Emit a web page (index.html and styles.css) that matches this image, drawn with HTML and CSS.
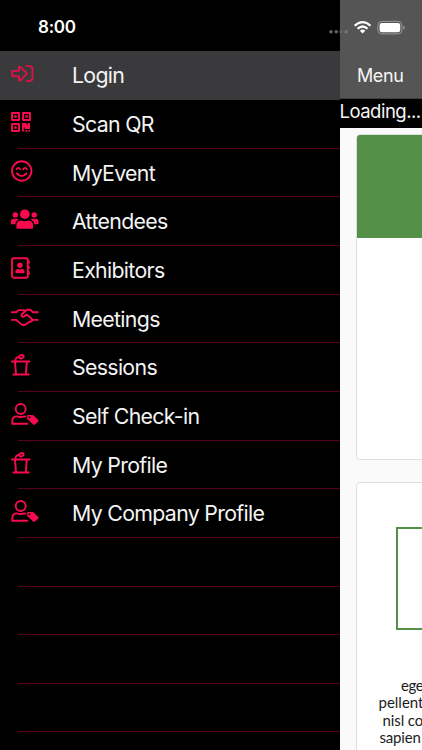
FILE: index.html
```html
<!DOCTYPE html>
<html lang="en">
<head>
<meta charset="utf-8">
<title>Menu</title>
<link rel="stylesheet" href="styles.css">
</head>
<body>
<svg class="defs" width="0" height="0">
  <symbol id="podium" viewBox="0 0 28 22" overflow="visible"><g class="line"><path d="M.9 7.5h17.6M4 7.8l1 12.4M15.8 7.8l-1 12.4M2.4 20.5h15.4M4.7 7.2Q3.7 3.4 8 3"/><ellipse cx="10.4" cy="2.7" rx="2.3" ry="1.6" transform="rotate(-15 10.4 2.7)"/></g></symbol>
  <symbol id="usertag" viewBox="0 0 28 22" overflow="visible"><g class="line"><circle cx="9.7" cy="6" r="5"/><path d="M16.2 20.7H1.3V18Q1.3 13.4 5.8 13.4Q7 13.4 8 13.8Q9.7 14.2 11.5 13.8Q13 13.2 14.4 13.7"/></g><path class="solid" fill-rule="evenodd" d="M16.5 11.9h4.8q.6 0 1 .4l5 4.7q.7.7 0 1.4l-3.8 3.3q-.7.5-1.4-.1l-5.3-5.1q-.6-.5-.6-1.2v-3.1q0-.3.3-.3zm2 1.4a1 1 0 1 0 .1 2 1 1 0 0 0-.1-2z"/></symbol>
</svg>
<div class="app">
  <aside class="sidebar">
    <div class="clock">8:00</div>
    <ul class="menu">
      <li class="row active"><svg class="icon" viewBox="0 0 28 22"><g class="line"><path d="M1.2 8.9H8V5.4q0-1.6 1.4-.5l6 5.8q.8.9 0 1.7l-6 5.8Q8 19.3 8 17.7v-3.4H2q-.8 0-.8-.8zM15.5 4.1h3q3 0 3 3v9q0 3-3 3h-3"/></g></svg><span class="label">Login</span></li>
      <li class="row"><svg class="icon" viewBox="0 0 28 22"><g class="line"><path d="M1 2h7v7H1zM12 2h7v7h-7zM1 13h7v7H1z"/></g><path class="solid" d="M3.3 4.3h2.4v2.4H3.3zM14.3 4.3h2.4v2.4h-2.4zM3.3 15.3h2.4v2.4H3.3zM11 12h4.4v1.5h1.5V12H19v6h-5v-1.5h-1.2v4H11zM14.6 19h1.6v1.7h-1.6zM17.4 19H19v1.7h-1.6z"/></svg><span class="label">Scan QR</span></li>
      <li class="row"><svg class="icon" viewBox="0 0 28 22"><g class="line"><circle cx="10.7" cy="11" r="9.7"/><path d="M6 13.5q4.7 5.2 9.4 0M5.5 9.2q1.8-2.6 3.6 0M12.3 9.2q1.8-2.6 3.6 0"/></g></svg><span class="label">MyEvent</span></li>
      <li class="row"><svg class="icon" viewBox="0 0 28 22"><g class="solid"><circle cx="13.8" cy="6.2" r="4.8"/><circle cx="4.3" cy="6.9" r="2.7"/><circle cx="23.2" cy="6.9" r="2.7"/><path d="M6.1 20.8q-.7 0-.7-.8v-2.2q0-5.2 5.1-5.2 3.3 1.3 6.5 0 5.1 0 5.1 5.2V20q0 .8-.7.8zM0 16.3v-2.7q0-2.8 2.7-2.8h3.2q1.2 0 1.8.8-3.1 1.7-3.4 4.7zM27.5 16.3v-2.7q0-2.8-2.7-2.8h-3.2q-1.2 0-1.8.8 3.1 1.7 3.4 4.7z"/></g></svg><span class="label">Attendees</span></li>
      <li class="row"><svg class="icon" viewBox="0 0 28 22"><g class="line"><rect x="1" y="1.2" width="15.8" height="19.5" rx="1.7"/></g><g class="solid"><circle cx="8.9" cy="8.2" r="2.7"/><path d="M4.3 15.6v-1q0-2.5 2.7-2.5 1.9.7 3.8 0 2.7 0 2.7 2.5v1q0 .7-.8.7H5q-.7 0-.7-.7zM17 3.4h1.3q.5 0 .5.5v2.2q0 .5-.5.5H17zM17 8.8h1.3q.5 0 .5.5v2.2q0 .5-.5.5H17zM17 14.2h1.3q.5 0 .5.5v2.2q0 .5-.5.5H17z"/></g></svg><span class="label">Exhibitors</span></li>
      <li class="row"><svg class="icon" viewBox="0 0 28 22"><g class="line"><path d="M.8 6.2h4.5l2.2-2.1h5.2l1.7.9 1.6-1.2h3.5L22 6.3h4.8M14.4 5l-3.6 3.3q-1 1.3.2 2.2 1.2.7 2.5-.3l2-1.7 5 4q1.5 1.6.1 2.8-1.1.8-2.3.2-.4 1.7-2.3 1.6-.8 2-2.8 1.5-1.5 1-3.2-.5l-4.7-4.2H.8M20.8 13.9h6"/></g></svg><span class="label">Meetings</span></li>
      <li class="row"><svg class="icon"><use href="#podium"/></svg><span class="label">Sessions</span></li>
      <li class="row"><svg class="icon"><use href="#usertag"/></svg><span class="label">Self Check-in</span></li>
      <li class="row"><svg class="icon"><use href="#podium"/></svg><span class="label">My Profile</span></li>
      <li class="row"><svg class="icon"><use href="#usertag"/></svg><span class="label">My Company Profile</span></li>
      <li class="row"></li>
      <li class="row"></li>
      <li class="row"></li>
      <li class="row"></li>
      <li class="row"></li>
    </ul>
  </aside>
  <main class="content">
    <header class="topbar">Menu</header>
    <div class="loading">Loading...</div>
    <div class="cards">
      <section class="card first"><div class="banner"></div></section>
      <section class="card second">
        <div class="frame"></div>
        <div class="copy">
          <p class="l1">ege</p>
          <p class="l2">pellent</p>
          <p class="l3">nisl co</p>
          <p class="l4">sapien</p>
        </div>
      </section>
    </div>
  </main>
  <svg class="status" viewBox="0 0 80 20">
    <g fill="#626262"><circle cx="3" cy="13.8" r="1.8"/><circle cx="8.2" cy="13.8" r="1.8"/><circle cx="13.1" cy="13.8" r="1.8"/><circle cx="18.2" cy="13.8" r="1.8" fill="#777"/></g>
    <g fill="none" stroke="#fff" stroke-width="2.2"><path d="M26.7 7.7q7.9-7.2 15.8 0M29.6 10.8q5-4.6 10 0"/></g>
    <path fill="#fff" d="M31.9 12.7q2.7-2.2 5.4 0L34.6 15.5z"/>
    <rect x="49.9" y="3.4" width="24" height="12.5" rx="3.7" fill="none" stroke="#999"/>
    <rect x="51.6" y="5" width="20.6" height="9.3" rx="2.3" fill="#fff"/>
    <path d="M75.3 7.8q1.5.4 1.5 1.9t-1.5 1.9z" fill="#999"/>
  </svg>
</div>
</body>
</html>
```
FILE: styles.css
```css
* { box-sizing: border-box; }
body { margin: 0; font-family: Inter, "Liberation Sans", sans-serif; }
p, ul { margin: 0; padding: 0; }
.defs { position: absolute; }
.app { position: relative; display: flex; width: 422px; height: 750px; overflow: hidden; background: #fafafa; }
.sidebar { flex: none; width: 339.5px; height: 750px; overflow: hidden; background: #000; }
.clock { height: 51.3px; padding: 17px 0 0 38px; color: #fff; font-size: 17px; line-height: 21px; font-weight: 600; letter-spacing: -.25px; }
.menu { list-style: none; }
.row {
  display: flex;
  height: 48.67px;
  padding-left: 11px;
  color: #f4f4f4;
  background: linear-gradient(#58001f, #58001f) 18px 100% / 100% 1px no-repeat;
}
.row.active { background: #3a3a3c; }
.icon { flex: none; width: 28px; height: 22px; margin-top: 11px; overflow: visible; }
.active .icon { opacity: .85; }
.line { fill: none; stroke: #f90a4e; stroke-width: 1.9; stroke-linejoin: round; stroke-linecap: round; }
.solid { fill: #f90a4e; }
.label { margin-left: 33px; font-size: 21.3px; line-height: 48px; letter-spacing: -.67px; white-space: nowrap; }
.content { flex: none; width: 82.5px; overflow: hidden; }
.topbar { height: 99px; padding: 64px 0 0 17.5px; background: #555; color: #f5f5f5; font-size: 18px; line-height: 24px; letter-spacing: -.4px; border-bottom: 1px solid #3e3e3e; }
.loading { height: 29px; background: #000; color: #f5f5f5; font-size: 18.5px; line-height: 24px; letter-spacing: -.5px; white-space: nowrap; }
.cards { display: flex; flex-direction: column; gap: 22px; padding: 6px 0 0 16.5px; }
.card { width: 120px; border: 1px solid #dedede; border-radius: 4px; background: #fff; overflow: hidden; }
.first { height: 326px; }
.second { height: 300px; }
.banner { height: 103px; background: #559048; }
.frame { width: 100px; height: 103px; margin: 44px 0 0 39px; border: 2px solid #559048; }
.copy { margin-top: 47px; color: #1c1c1c; font-family: Lato, sans-serif; font-size: 15px; line-height: 17.4px; white-space: nowrap; }
.l1 { padding-left: 44px; letter-spacing: -.4px; }
.l2 { padding-left: 21.5px; }
.l3 { padding-left: 25.5px; letter-spacing: -.1px; }
.l4 { padding-left: 22.5px; letter-spacing: -.2px; }
.status { position: absolute; left: 328px; top: 17.5px; width: 80px; height: 20px; }
```
